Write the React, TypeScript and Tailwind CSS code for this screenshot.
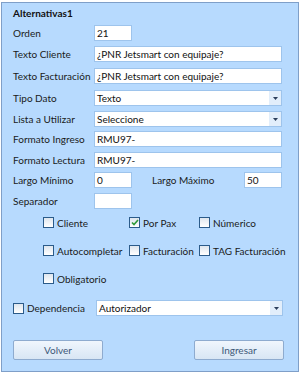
import React from "react"

const font = { fontFamily: 'Lato, "Noto Sans", sans-serif' }

function Field({ value, w }: { value: string; w: string }) {
  return (
    <div className={`${w} h-[16px] bg-white border border-[#9ec4ec] flex items-center pl-[2px] text-[10px] text-[#111] leading-none whitespace-nowrap overflow-hidden`}>
      {value}
    </div>
  )
}

function Select({ value, w }: { value: string; w: string }) {
  return (
    <div className={`${w} h-[16px] bg-white border border-[#9ec4ec] flex items-center text-[10px] text-[#111] leading-none`}>
      <span className="flex-1 pl-[2px] whitespace-nowrap overflow-hidden">{value}</span>
      <span className="w-[12px] h-[14px] bg-[#e2eefb] flex items-center justify-center">
        <svg width="5" height="3" viewBox="0 0 5 3">
          <path d="M0 0H5L2.5 3Z" fill="#2b3f5c" />
        </svg>
      </span>
    </div>
  )
}

function Check({ label, checked, w }: { label: string; checked?: boolean; w?: string }) {
  return (
    <div className={`${w ?? ""} flex items-center h-[11px]`}>
      <span className="w-[11px] h-[11px] border border-[#2b5b8a] bg-gradient-to-b from-[#dfe6ee] to-[#ffffff] flex items-center justify-center shrink-0">
        {checked && (
          <svg width="8" height="7" viewBox="0 0 8 7">
            <path d="M1 3.5L3 5.5L7 1" stroke="#2e9a3a" strokeWidth="1.6" fill="none" />
          </svg>
        )}
      </span>
      <span className="ml-[3px] text-[10px] text-[#1a1a1a] leading-none whitespace-nowrap">{label}</span>
    </div>
  )
}

function Row({ label, children, mt }: { label: string; children: React.ReactNode; mt: string }) {
  return (
    <div className={`flex items-center h-[16px] ${mt}`}>
      <span className="w-[81px] text-[10px] text-[#1a1a1a] leading-none whitespace-nowrap">{label}</span>
      {children}
    </div>
  )
}

export default function App() {
  return (
    <div className="w-[300px] h-[374px] bg-white overflow-hidden" style={font}>
      <div className="ml-[1px] mt-[2px] w-[298px] h-[370px] border border-[#7f9fc8] bg-[#b7dafe] pl-[11px] flex flex-col">
        <div className="mt-[5px] h-[10px] flex items-center text-[10px] font-bold text-[#111] leading-none">Alternativas1</div>

        <Row label="Orden" mt="mt-[7px]"><Field value="21" w="w-[38px]" /></Row>
        <Row label="Texto Cliente" mt="mt-[5px]"><Field value="¿PNR Jetsmart con equipaje?" w="w-[188px]" /></Row>
        <Row label="Texto Facturación" mt="mt-[6px]"><Field value="¿PNR Jetsmart con equipaje?" w="w-[188px]" /></Row>
        <Row label="Tipo Dato" mt="mt-[6px]"><Select value="Texto" w="w-[188px]" /></Row>
        <Row label="Lista a Utilizar" mt="mt-[5px]"><Select value="Seleccione" w="w-[188px]" /></Row>
        <Row label="Formato Ingreso" mt="mt-[4px]"><Field value="RMU97-" w="w-[188px]" /></Row>
        <Row label="Formato Lectura" mt="mt-[5px]"><Field value="RMU97-" w="w-[188px]" /></Row>
        <Row label="Largo Mínimo" mt="mt-[4px]">
          <Field value="0" w="w-[38px]" />
          <span className="ml-[20px] w-[92px] text-[10px] text-[#1a1a1a] leading-none whitespace-nowrap">Largo Máximo</span>
          <Field value="50" w="w-[38px]" />
        </Row>
        <Row label="Separador" mt="mt-[5px]"><Field value="" w="w-[38px]" /></Row>

        <div className="mt-[8px] ml-[30px] flex flex-col gap-[17px]">
          <div className="flex">
            <Check label="Cliente" w="w-[86px]" />
            <Check label="Por Pax" checked w="w-[70px]" />
            <Check label="Númerico" />
          </div>
          <div className="flex">
            <Check label="Autocompletar" w="w-[86px]" />
            <Check label="Facturación" w="w-[70px]" />
            <Check label="TAG Facturación" />
          </div>
          <div className="flex">
            <Check label="Obligatorio" />
          </div>
        </div>

        <div className="mt-[16px] flex items-center h-[16px]">
          <Check label="Dependencia" w="w-[83px]" />
          <Select value="Autorizador" w="w-[187px]" />
        </div>

        <div className="mt-[24px] flex w-[271px] justify-between">
          <button className="w-[90px] h-[20px] rounded-[2px] border border-[#8eabcf] bg-gradient-to-b from-[#f0f6fd] to-[#d8e6f4] text-[10px] text-[#3d5878] leading-none">Volver</button>
          <button className="w-[90px] h-[20px] rounded-[2px] border border-[#8eabcf] bg-gradient-to-b from-[#f0f6fd] to-[#d8e6f4] text-[10px] text-[#3d5878] leading-none">Ingresar</button>
        </div>
      </div>
    </div>
  )
}
